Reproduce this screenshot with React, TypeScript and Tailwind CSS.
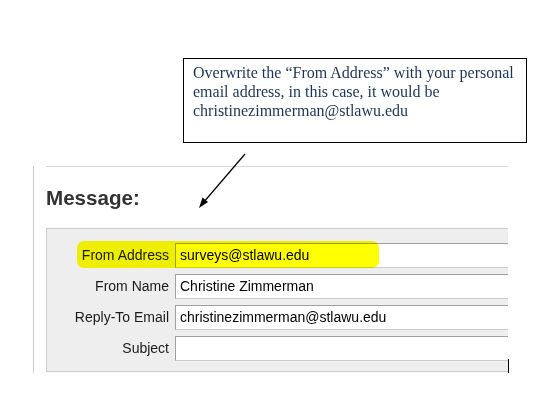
export default function App() {
  const rows = [
    { label: 'From Address', value: 'surveys@stlawu.edu' },
    { label: 'From Name', value: 'Christine Zimmerman' },
    { label: 'Reply-To Email', value: 'christinezimmerman@stlawu.edu' },
    { label: 'Subject', value: '' },
  ];

  return (
    <div className="relative w-[542px] h-[409px] bg-white overflow-hidden" style={{ fontFamily: '"Liberation Sans", Arial, sans-serif' }}>
      {/* Callout */}
      <div
        className="ml-[183px] mt-[58px] w-[344px] h-[85px] border border-black pl-[9px] pt-[4px] text-[16px] leading-[19px] text-[#1c3557]"
        style={{ fontFamily: '"Liberation Serif", "Times New Roman", serif' }}
      >
        Overwrite the “From Address” with your personal email address, in this case, it would be christinezimmerman@stlawu.edu
      </div>

      {/* Form section */}
      <div className="ml-[33px] mt-[23px] w-[475px] h-[207px] border-l border-[#cfcfcf]">
        <div className="ml-[12px] border-t border-[#d6d6d6] overflow-hidden">
          <h2 className="mt-[19px] text-[20.6px] leading-[24px] font-bold text-[#333]">Message:</h2>
          <div className="relative mt-[18px] w-[640px] border border-[#cccccc] bg-[#eeeeee] pt-[14px] pb-[10px]">
            <div className="flex flex-col gap-[6px]">
              {rows.map((r) => (
                <div key={r.label} className="flex items-center">
                  <div className="w-[122px] text-right text-[14px] text-[#1a1a1a]">{r.label}</div>
                  <div className="ml-[6px] h-[25px] flex-1 flex items-center bg-white border-t border-l border-[#a0a0a0] border-b-[#cccccc] border-b border-r border-r-[#cccccc] pl-[4px] text-[14px] text-black">
                    {r.value}
                  </div>
                </div>
              ))}
            </div>
            {/* Highlighter mark */}
            <div className="absolute left-[30px] top-[12px] w-[302px] h-[27px] rounded-[7px] bg-[#ffff00] mix-blend-multiply" />
          </div>
        </div>
      </div>

      {/* Cursor tick */}
      <div className="absolute left-[508px] top-[359px] w-px h-[14px] bg-black" />

      {/* Arrow */}
      <svg className="absolute left-0 top-0 pointer-events-none" width="542" height="409">
        <line x1="245" y1="154" x2="203" y2="203" stroke="#000" strokeWidth="1.2" />
        <polygon points="199,208 202.5,197.5 208,202" fill="#000" />
      </svg>
    </div>
  );
}
